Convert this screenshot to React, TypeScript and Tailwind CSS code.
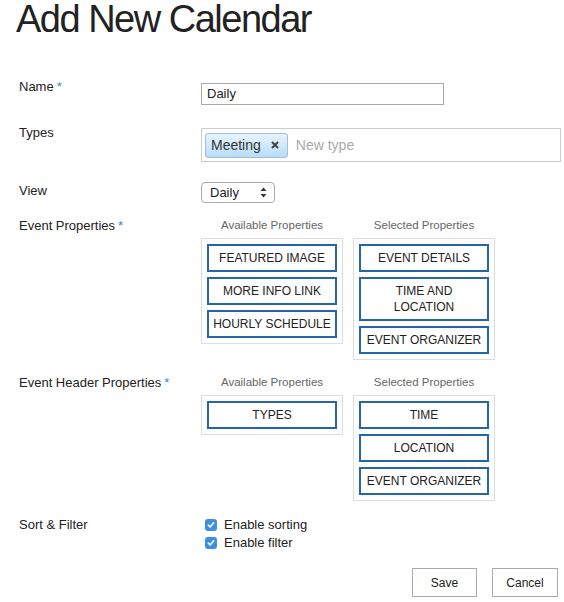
import { useState } from 'react';

const Star = () => <span className="text-[#3a87c8] ml-[3px]">*</span>;

function PropItem({ label }: { label: string }) {
  return (
    <div className="min-h-[28px] border-2 border-[#2466a8] flex items-center justify-center text-center text-[12px] leading-[16px] text-[#222] px-[1px] py-[4px] whitespace-pre-line">
      {label}
    </div>
  );
}

function PropColumn({ title, items }: { title: string; items: string[] }) {
  return (
    <div className="w-[142px] flex flex-col">
      <div className="text-[11.5px] leading-[13px] text-[#666] text-center">{title}</div>
      <div className="mt-[6px] border border-[#ddd] p-[5px] flex flex-col gap-[5px]">
        {items.map(item => (
          <PropItem key={item} label={item} />
        ))}
      </div>
    </div>
  );
}

function Check({ label }: { label: string }) {
  const [on, setOn] = useState(true);
  return (
    <label className="flex items-center h-[18px] cursor-pointer" onClick={() => setOn(!on)}>
      <span className={on ? "w-[12px] h-[12px] rounded-[3px] bg-[#3d8fe3] flex items-center justify-center ml-[4px]" : "w-[12px] h-[12px] rounded-[3px] border border-[#999] bg-white ml-[4px]"}>
        {on && (
          <svg width="8" height="8" viewBox="0 0 8 8">
            <path d="M1.3 4.2 L3.2 6 L6.7 1.8" fill="none" stroke="white" strokeWidth="1.6" strokeLinecap="round" strokeLinejoin="round" />
          </svg>
        )}
      </span>
      <span className="ml-[7px] text-[13px] text-[#222]">{label}</span>
    </label>
  );
}

export default function App() {
  return (
    <div className="w-[564px] h-[602px] bg-white overflow-hidden font-['Liberation_Sans',Arial,sans-serif] text-[#222]">
      <div className="pt-[1px]">
        <h1 className="text-[38px] leading-[45px] -mt-[4px] tracking-[-1.5px] pl-[16px] text-[#222]">Add New Calendar</h1>
      </div>

      <div className="pl-[19px]">
        {/* Name */}
        <div className="flex mt-[37px]">
          <div className="w-[182px] shrink-0 text-[13px] leading-[15px]">
            Name<Star />
          </div>
          <div className="mt-[4px] w-[243px] h-[22px] border border-[#a9a9a9] px-[5px] text-[13px] leading-[20px]">
            Daily
          </div>
        </div>

        {/* Types */}
        <div className="flex mt-[20px]">
          <div className="w-[182px] shrink-0 text-[13px] leading-[15px]">Types</div>
          <div className="mt-[3px] w-[360px] h-[34px] border border-[#ccc] flex items-center pl-[3px]">
            <div className="h-[25px] px-[5px] flex items-center rounded-[3px] border border-[#9fbfd8] bg-gradient-to-b from-[#e8f4fd] to-[#b7dcf8] text-[14px] text-[#333]">
              Meeting
              <svg className="ml-[10px] mr-[3px]" width="8" height="8" viewBox="0 0 8 8">
                <path d="M1 1 L7 7 M7 1 L1 7" stroke="#444" strokeWidth="2" />
              </svg>
            </div>
            <span className="ml-[8px] text-[14px] text-[#aaa]">New type</span>
          </div>
        </div>

        {/* View */}
        <div className="flex mt-[20px]">
          <div className="w-[182px] shrink-0 text-[13px] leading-[15px] mt-[1px]">View</div>
          <div className="w-[74px] h-[21px] rounded-[4px] border border-[#aaa] flex items-center justify-between pl-[8px] pr-[7px] text-[13px]">
            Daily
            <svg width="7" height="11" viewBox="0 0 7 11">
              <path d="M3.5 0.5 L6.5 4 L0.5 4 Z M3.5 10.5 L6.5 7 L0.5 7 Z" fill="#333" />
            </svg>
          </div>
        </div>

        {/* Event Properties */}
        <div className="flex mt-[15px]">
          <div className="w-[182px] shrink-0 text-[13px] leading-[15px]">
            Event Properties<Star />
          </div>
          <div className="flex gap-[10px] items-start mt-[1px]">
            <PropColumn title="Available Properties" items={['FEATURED IMAGE', 'MORE INFO LINK', 'HOURLY SCHEDULE']} />
            <PropColumn title="Selected Properties" items={['EVENT DETAILS', 'TIME AND\nLOCATION', 'EVENT ORGANIZER']} />
          </div>
        </div>

        {/* Event Header Properties */}
        <div className="flex mt-[15px]">
          <div className="w-[182px] shrink-0 text-[13px] leading-[15px]">
            Event Header Properties<Star />
          </div>
          <div className="flex gap-[10px] items-start mt-[1px]">
            <PropColumn title="Available Properties" items={['TYPES']} />
            <PropColumn title="Selected Properties" items={['TIME', 'LOCATION', 'EVENT ORGANIZER']} />
          </div>
        </div>

        {/* Sort & Filter */}
        <div className="flex mt-[16px]">
          <div className="w-[182px] shrink-0 text-[13px] leading-[15px]">Sort &amp; Filter</div>
          <div className="flex flex-col mt-[-1px]">
            <Check label="Enable sorting" />
            <Check label="Enable filter" />
          </div>
        </div>

        {/* Buttons */}
        <div className="flex justify-end gap-[15px] mt-[16px] pr-[6px]">
          <button className="w-[65px] h-[29px] border border-[#aaa] bg-white text-[12px] text-[#222]">Save</button>
          <button className="w-[66px] h-[29px] border border-[#aaa] bg-white text-[12px] text-[#222]">Cancel</button>
        </div>
      </div>
    </div>
  );
}
